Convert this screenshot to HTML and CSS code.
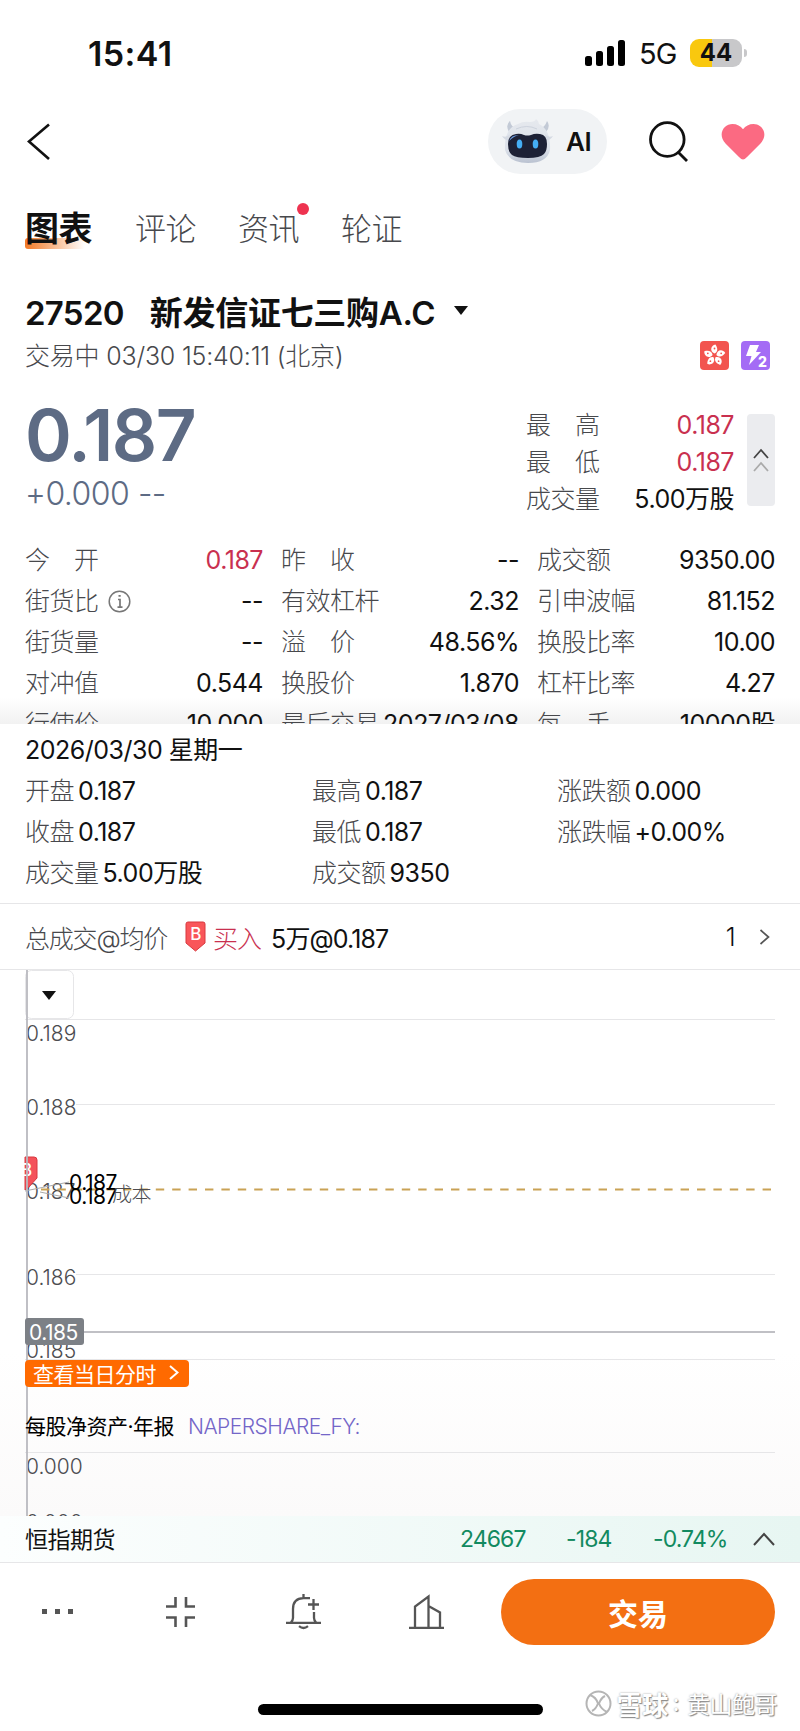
FILE: index.html
```html
<!doctype html>
<html lang="zh-CN">
<head>
    <meta charset="UTF-8">
    <meta name="viewport" content="width=device-width, initial-scale=1.0">
    <title>27520 新发信证七三购A.C</title>
    <link rel="stylesheet" href="styles.css">
</head>
<body>
<div class="status">
    <span class="time">15:41</span>
    <svg class="signal" width="40" height="26" viewBox="0 0 40 26">
        <rect x="0" y="16" width="7" height="10" rx="2.5"/>
        <rect x="11" y="11" width="7" height="15" rx="2.5"/>
        <rect x="22" y="6" width="7" height="20" rx="2.5"/>
        <rect x="33" y="0" width="7" height="26" rx="2.5"/>
    </svg>
    <span class="network">5G</span>
    <span class="battery">44</span>
    <span class="battery-cap"></span>
</div>

<header class="nav">
    <svg class="back" width="24" height="38" viewBox="0 0 24 38">
        <path d="M22 1.5 2 18.5 22 36" fill="none" stroke="#111" stroke-width="2.6"/>
    </svg>
    <div class="ai">
        <svg width="52" height="46" viewBox="0 0 52 46">
            <defs>
                <linearGradient id="head" x1="0" y1="0" x2="0" y2="1">
                    <stop offset="0" stop-color="#e6e9ee"/>
                    <stop offset=".7" stop-color="#dbe0e9"/>
                    <stop offset="1" stop-color="#b9c1d0"/>
                </linearGradient>
            </defs>
            <path d="M7 13Q3 6 8 2q1 6 7 8zM44 13q5-6 1-11-2 6-7 8z" fill="#c3cad6"/>
            <path d="M3 31Q2 9 16 5q5-3 12-2 5 0 6-3 3 2 3 5 12 6 11 26-3 13-22 13T3 31z" fill="url(#head)"/>
            <path d="M0 17q5 2 8-2l-1 6q-4 1-7-4zM51 17q-5 2-8-2l1 6q4 1 7-4z" fill="#d5dae3"/>
            <path d="M14 10q11-5 21 0" fill="none" stroke="#cdd3dd" stroke-width="1"/>
            <path d="M6 25q0-9 8-10 4-1 8 1 3 1 7 0 4-2 9-1 7 1 7 10 0 7-3 10-4 4-16 4t-16-3q-4-3-4-11z" fill="#1d2136"/>
            <path d="M7 22q2-6 10-6-5 1-10 6z" fill="#6fa0e8"/>
            <ellipse cx="17.500" cy="25" rx="2.8" ry="4.600" fill="#45aef5"/>
            <ellipse cx="33.500" cy="25" rx="2.8" ry="4.600" fill="#45aef5"/>
        </svg>
        <span>AI</span>
    </div>
    <svg class="search" width="40" height="42" viewBox="0 0 40 42">
        <circle cx="18.3" cy="18.5" r="16.8" fill="none" stroke="#111" stroke-width="2.8"/>
        <path d="m29 31 9 9" stroke="#111" stroke-width="2.8"/>
    </svg>
    <svg class="heart" width="44" height="38" viewBox="0 0 44 38">
        <path d="M22 36.5q-1.500 0-4-2.500L4.500 20.500C-4 11 3 1 11.500 1 16 1 19.500 3 22 6.200 24.500 3 28 1 32.500 1 41 1 48 11 39.500 20.500L26 34q-2.500 2.500-4 2.500z" fill="#fb6a82"/>
    </svg>
</header>

<nav class="tabs">
    <span class="tab active">图表</span>
    <span class="tab">评论</span>
    <span class="tab dot">资讯</span>
    <span class="tab">轮证</span>
</nav>

<section class="title">
    <h1><span class="code">27520</span>新发信证七三购A.C</h1>
    <svg width="14" height="9" viewBox="0 0 14 9"><path d="M0 0h14L7 9z" fill="#111"/></svg>
</section>
<section class="session">
    <span class="when">交易中 03/30 15:40:11 (北京)</span>
    <svg width="29" height="29" viewBox="-14.500 -14.500 29 29">
        <defs><path id="petal" d="M0-2C-5-4-4-10 1-11 3-8 4-4 0-2z"/></defs>
        <rect x="-14.500" y="-14.500" width="29" height="29" rx="4" fill="#f2544f"/>
        <g fill="#fff">
            <use href="#petal"/>
            <use href="#petal" transform="rotate(72)"/>
            <use href="#petal" transform="rotate(144)"/>
            <use href="#petal" transform="rotate(216)"/>
            <use href="#petal" transform="rotate(288)"/>
        </g>
        <g fill="#f2544f">
            <circle cy="-7" r=".9"/>
            <circle cy="-7" r=".9" transform="rotate(72)"/>
            <circle cy="-7" r=".9" transform="rotate(144)"/>
            <circle cy="-7" r=".9" transform="rotate(216)"/>
            <circle cy="-7" r=".9" transform="rotate(288)"/>
        </g>
    </svg>
    <svg class="level" width="29" height="29" viewBox="0 0 29 29">
        <rect width="29" height="29" rx="4" fill="#a46cf5"/>
        <path d="M9 4h9l-3 7h5L8 24l2.500-9H5z" fill="#fff"/>
        <text x="17" y="25.500">2</text>
    </svg>
</section>

<section class="quote">
    <div class="price">
        <div class="last">0.187</div>
        <div class="change">+0.000 --</div>
    </div>
    <dl class="brief">
        <div><dt>最　高</dt><dd class="up">0.187</dd></div>
        <div><dt>最　低</dt><dd class="up">0.187</dd></div>
        <div><dt>成交量</dt><dd>5.00万股</dd></div>
    </dl>
    <div class="fold">
        <svg width="16" height="24" viewBox="0 0 16 24" fill="none" stroke-width="1.800">
            <path d="M1 10 8 2l7 8" stroke="#444"/>
            <path d="M1 23 8 15l7 8" stroke="#aaa"/>
        </svg>
    </div>
</section>

<dl class="facts">
    <div><dt>今　开</dt><dd class="up">0.187</dd></div>
    <div><dt>昨　收</dt><dd>--</dd></div>
    <div><dt>成交额</dt><dd>9350.00</dd></div>
    <div>
        <dt>街货比
            <svg width="23" height="23" viewBox="0 0 23 23">
                <circle cx="11.500" cy="11.500" r="10.300" fill="none" stroke="#777" stroke-width="1.500"/>
                <path d="M10 9.500h2V17M9.500 17.200h5M10.500 5.800h2.200" fill="none" stroke="#777" stroke-width="1.700"/>
            </svg>
        </dt>
        <dd>--</dd>
    </div>
    <div><dt>有效杠杆</dt><dd>2.32</dd></div>
    <div><dt>引申波幅</dt><dd>81.152</dd></div>
    <div><dt>街货量</dt><dd>--</dd></div>
    <div><dt>溢　价</dt><dd>48.56%</dd></div>
    <div><dt>换股比率</dt><dd>10.00</dd></div>
    <div><dt>对冲值</dt><dd>0.544</dd></div>
    <div><dt>换股价</dt><dd>1.870</dd></div>
    <div><dt>杠杆比率</dt><dd>4.27</dd></div>
    <div><dt>行使价</dt><dd>10.000</dd></div>
    <div><dt>最后交易</dt><dd>2027/03/08</dd></div>
    <div><dt>每　手</dt><dd>10000股</dd></div>
</dl>

<section class="day">
    <div class="date">2026/03/30 星期一</div>
    <dl>
        <div><dt>开盘</dt><dd>0.187</dd></div>
        <div><dt>最高</dt><dd>0.187</dd></div>
        <div><dt>涨跌额</dt><dd>0.000</dd></div>
        <div><dt>收盘</dt><dd>0.187</dd></div>
        <div><dt>最低</dt><dd>0.187</dd></div>
        <div><dt>涨跌幅</dt><dd>+0.00%</dd></div>
        <div><dt>成交量</dt><dd>5.00万股</dd></div>
        <div><dt>成交额</dt><dd>9350</dd></div>
    </dl>
</section>

<section class="deals">
    <span class="label">总成交@均价</span>
    <svg class="flag" width="21" height="31" viewBox="0 0 21 31">
        <path d="M3 1h15q2 0 2 2v19l-9.500 8L1 22V3q0-2 2-2z" fill="#f9565a" stroke="#d8383f"/>
        <text x="10.500" y="19">B</text>
    </svg>
    <span class="side">买入</span>
    <span class="amount">5万@0.187</span>
    <span class="count">1</span>
    <svg width="11" height="16" viewBox="0 0 11 16">
        <path d="m1.500 1 8 7-8 7" fill="none" stroke="#555" stroke-width="1.700"/>
    </svg>
</section>

<section class="chart">
    <svg width="800" height="546" viewBox="0 970 800 546">
        <rect x="25.500" y="970.500" width="48" height="48" rx="6" fill="#fff" stroke="#e6e6e8"/>
        <path d="M42 991h14l-7 9z" fill="#111"/>
        <g class="gridlines">
            <path d="M25 1019.500h750M76 1104.500h699M76 1274.500h699M25 1359.500h750M25 1452.500h750"/>
        </g>
        <g class="scale">
            <text x="26" y="1041">0.189</text>
            <text x="26" y="1114.500">0.188</text>
            <text x="26" y="1199">0.187</text>
            <text x="26" y="1284.500">0.186</text>
            <text x="26" y="1358">0.185</text>
            <text x="26" y="1473.500">0.000</text>
            <text x="26" y="1529.500">0.000</text>
        </g>
        <path d="M25 1157h9q3 0 3 3v18l-9 10-3 2z" fill="#f4525a" stroke="#d8383f"/>
        <text class="mark" x="21" y="1176">B</text>
        <path d="M25 1191 69 1182M40 1192l29 6" stroke="#aaa" fill="none"/>
        <path class="cost" d="M41 1189.500H775"/>
        <text class="extreme" x="69" y="1190">0.187</text>
        <text class="extreme" x="69" y="1204">0.187</text>
        <text class="cost-label" x="112" y="1202">成本</text>
        <path d="M83 1332H775" stroke="#c0c0c5" stroke-width="1.800"/>
        <path d="M27 970V1516" stroke="#b9b9bf" stroke-width="1.800"/>
        <rect x="25" y="1318" width="59" height="27" rx="3" fill="#7c8086"/>
        <text class="cursor" x="29" y="1339.500">0.185</text>
        <text class="indicator" x="25" y="1434">每股净资产·年报</text>
        <text class="series" x="188" y="1434">NAPERSHARE_FY:</text>
    </svg>
    <div class="intraday">
        查看当日分时
        <svg width="10" height="15" viewBox="0 0 10 15">
            <path d="m1 1 7.500 6.500L1 14" fill="none" stroke="#fff" stroke-width="2"/>
        </svg>
    </div>
</section>

<section class="futures">
    <span class="name">恒指期货</span>
    <span class="f-last">24667</span>
    <span class="f-change">-184</span>
    <span class="f-rate">-0.74%</span>
    <svg width="22" height="14" viewBox="0 0 22 14">
        <path d="M1 13 11 2l10 11" fill="none" stroke="#444" stroke-width="2"/>
    </svg>
</section>

<footer class="toolbar">
    <svg width="35" height="36" viewBox="0 0 35 36" fill="#555">
        <path d="M2 15h5v5H2zM15 15h5v5h-5zM28 15h5v5h-5z"/>
    </svg>
    <svg width="35" height="36" viewBox="0 0 35 36" fill="none" stroke="#555" stroke-width="2.600">
        <path d="M12.500 3v9.500H3M23 3v9.500h9M3 23.500h9.500V33M32 23.500h-9V33"/>
    </svg>
    <svg width="35" height="36" viewBox="0 0 35 36" fill="none" stroke="#555" stroke-width="2.300">
        <path d="M17.500 0v4M24 4.200h-6.500Q7 4.500 7 15v9q0 2-2 4.500M28 18v6q0 2 2 4.500M0 28.800h35M13 32.200q4.500 3.600 9 0M27.500 5v11M22 10.500h11"/>
    </svg>
    <svg width="35" height="36" viewBox="0 0 35 36" fill="none" stroke="#555" stroke-width="2.300">
        <path d="M0 33.800h35M6 34V12.500L19.500 2.500V34M19.500 12 31 18.500V34"/>
    </svg>
    <button class="trade">交易</button>
</footer>

<div class="bottom">
    <div class="home"></div>
    <div class="brand">
        <svg width="27" height="27" viewBox="0 0 27 27" fill="none" stroke="#b5b5b5" stroke-width="2">
            <circle cx="13.500" cy="13.500" r="12"/>
            <path d="M5 5q6 2 8 8.500Q11 19 7 21M22 22q-6-3-8-8.500Q16 8 20 6"/>
        </svg>
        <b>雪球</b><span class="colon">:</span><span>黄山鲍哥</span>
    </div>
</div>
</body>
</html>
```
FILE: styles.css
```css
:root {
    --ink: #111;
    --label: #47484c;
    --up: #c9304f;
    --flat: #5d6b84;
    --down: #128a60;
    --orange: #f36f12;
    --line: #e6e6e8;
}

* {
    box-sizing: border-box;
}

body {
    width: 800px;
    height: 1731px;
    margin: 0;
    overflow: hidden;
    background: #fff;
    color: var(--ink);
    font-family: Inter, "Noto Sans CJK SC", sans-serif;
    font-size: 25px;
    letter-spacing: -0.5px;
    white-space: nowrap;
}

svg {
    display: block;
    flex: none;
}

dl, dd, h1 {
    margin: 0;
}

.status {
    display: flex;
    align-items: center;
    height: 106px;
    padding: 0 53px 0 88px;
}

.time {
    font-size: 34px;
    font-weight: 600;
    letter-spacing: 0.4px;
    margin-right: auto;
}

.network {
    width: 51px;
    margin-left: 14px;
    padding-top: 1px;
    font-size: 29px;
    letter-spacing: -0.8px;
}

.battery {
    width: 52px;
    height: 28px;
    border-radius: 9px;
    background: linear-gradient(90deg, #f9c80e 43%, #c8c8ca 43%);
    font-size: 24px;
    font-weight: 700;
    line-height: 28px;
    text-align: center;
    letter-spacing: 0;
}

.battery-cap {
    width: 3px;
    height: 8px;
    margin-left: 2px;
    border-radius: 0 4px 4px 0;
    background: #c8c8ca;
}

.nav {
    display: flex;
    align-items: center;
    height: 71px;
    padding: 0 35px 0 27px;
}

.ai {
    display: flex;
    align-items: center;
    gap: 12px;
    width: 119px;
    height: 65px;
    margin-left: auto;
    padding-left: 14px;
    border-radius: 33px;
    background: #f1f3f5;
    font-size: 26px;
    font-weight: 600;
}

.search {
    margin-left: 42px;
}

.heart {
    margin-left: 32px;
}

.tabs {
    display: flex;
    align-items: center;
    gap: 42px;
    height: 102px;
    padding: 0 25px 4px;
    color: var(--label);
    font-size: 31px;
    font-weight: 300;
}

.tab {
    position: relative;
}

.active {
    margin-right: 1px;
    color: var(--ink);
    font-size: 34px;
    font-weight: 700;
    z-index: 0;
}

.active::before {
    content: "";
    position: absolute;
    z-index: -1;
    left: 0;
    bottom: 2px;
    width: 60px;
    height: 11px;
    border-radius: 3px;
    background: linear-gradient(90deg, #f37a26, #fff);
}

.dot::after {
    content: "";
    position: absolute;
    right: -10px;
    top: -1px;
    width: 12px;
    height: 12px;
    border-radius: 50%;
    background: #ee3350;
}

.title {
    display: flex;
    align-items: center;
    gap: 19px;
    height: 66px;
    padding: 0 0 3px 25px;
}

.title h1 {
    font-size: 33px;
    font-weight: 600;
    letter-spacing: -0.3px;
}

.code {
    margin-right: 26px;
    letter-spacing: -0.7px;
}

.session {
    display: flex;
    align-items: center;
    gap: 12px;
    height: 20px;
    padding: 0 30px 0 25px;
}

.when {
    margin-right: auto;
    padding-bottom: 2px;
    color: var(--label);
    font-weight: 300;
    letter-spacing: -0.2px;
}

.level text {
    fill: #fff;
    font-size: 14px;
    font-weight: 800;
}

.quote {
    display: flex;
    height: 174px;
    padding: 39px 25px 0;
}

.price {
    flex: 1;
    color: var(--flat);
}

.last {
    height: 65px;
    font-size: 71px;
    font-weight: 600;
    line-height: 62px;
    letter-spacing: -1.5px;
}

.change {
    height: 44px;
    font-size: 32px;
    font-weight: 300;
    line-height: 50px;
}

.brief {
    width: 208px;
    padding-top: 3px;
}

.brief div {
    display: flex;
    justify-content: space-between;
    height: 37px;
    line-height: 37px;
}

dt {
    color: var(--label);
    font-weight: 300;
}

.up {
    color: var(--up);
}

.fold {
    display: flex;
    align-items: center;
    justify-content: center;
    width: 28px;
    height: 92px;
    margin: 10px 0 0 13px;
    border-radius: 4px;
    background: #ebecef;
}

.facts {
    display: grid;
    grid-template-columns: repeat(3, 238px);
    grid-auto-rows: 41px;
    column-gap: 18px;
    height: 185px;
    padding: 1px 25px 0;
    overflow: hidden;
    background: linear-gradient(#fff 158px, #f2f2f2);
}

.facts div {
    display: flex;
    justify-content: space-between;
    line-height: 41px;
}

.facts dt {
    display: flex;
    align-items: center;
    gap: 9px;
}

.day {
    height: 180px;
    padding: 6px 25px 0;
    border-bottom: 1px solid var(--line);
    line-height: 41px;
}

.day dl {
    display: grid;
    grid-template-columns: 287px 245px 1fr;
    grid-auto-rows: 41px;
}

.day dl div {
    display: flex;
    gap: 4px;
}

.deals {
    display: flex;
    align-items: center;
    height: 66px;
    padding: 0 30px 0 25px;
    border-bottom: 1px solid var(--line);
}

.label {
    color: var(--label);
    font-weight: 300;
    letter-spacing: -1.2px;
}

.flag {
    margin: 0 7px 0 18px;
}

.flag text, .mark {
    fill: #fff;
    font-size: 17px;
    font-weight: 500;
}

.flag text {
    text-anchor: middle;
}

.side {
    color: var(--up);
    font-weight: 300;
    letter-spacing: -1px;
}

.amount {
    margin-left: 10px;
    letter-spacing: -0.9px;
}

.count {
    margin: 0 24px 0 auto;
    font-weight: 300;
}

.chart {
    position: relative;
    height: 546px;
    background: linear-gradient(#fff 70%, #fbfafa);
}

.gridlines {
    stroke: var(--line);
}

.scale text {
    fill: #4c4c50;
    font-size: 21px;
    font-weight: 300;
    letter-spacing: 0;
}

.cost {
    fill: none;
    stroke: #c9a255;
    stroke-width: 1.8;
    stroke-dasharray: 8.4 8;
}

.extreme {
    font-size: 21px;
}

.cost-label {
    fill: #4c4c50;
    font-size: 20px;
    font-weight: 300;
}

.cursor {
    fill: #fff;
    font-size: 21px;
}

.indicator {
    font-size: 21px;
}

.series {
    fill: #7466c8;
    font-size: 21px;
    font-weight: 300;
}

.intraday {
    position: absolute;
    left: 25px;
    top: 390px;
    display: flex;
    align-items: center;
    gap: 13px;
    width: 164px;
    height: 27px;
    padding: 0 0 2px 8px;
    border-radius: 4px;
    background: #ff6a00;
    color: #fff;
    font-size: 21px;
}

.futures {
    display: flex;
    align-items: center;
    height: 47px;
    padding: 0 25px;
    border-bottom: 1px solid var(--line);
    background: linear-gradient(90deg, #fcfefe, #e7f6f2);
    color: var(--down);
    font-size: 23px;
    letter-spacing: -0.9px;
}

.name {
    width: 435px;
    padding-bottom: 2px;
    color: var(--ink);
    letter-spacing: -0.5px;
}

.f-last {
    width: 106px;
}

.f-change {
    width: 87px;
}

.f-rate {
    margin-right: auto;
}

.toolbar {
    display: flex;
    align-items: center;
    gap: 88px;
    height: 98px;
    padding: 0 25px 0 40px;
}

.trade {
    width: 275px;
    height: 66px;
    margin-left: -31px;
    border: none;
    border-radius: 33px;
    background: var(--orange);
    color: #fff;
    font: 600 30px Inter, "Noto Sans CJK SC", sans-serif;
}

.bottom {
    display: flex;
    align-items: center;
    height: 70px;
    padding: 18px 23px 0 258px;
}

.home {
    width: 285px;
    height: 11px;
    margin-top: 9px;
    border-radius: 6px;
    background: #000;
}

.brand {
    display: flex;
    align-items: center;
    gap: 5px;
    margin: -4px 0 0 auto;
    color: #fff;
    font-size: 23px;
    text-shadow: 1px 1px 1px #888, 0 0 2px #999;
}

.brand b {
    font-size: 26px;
}

.colon {
    margin-right: 3px;
}
```
